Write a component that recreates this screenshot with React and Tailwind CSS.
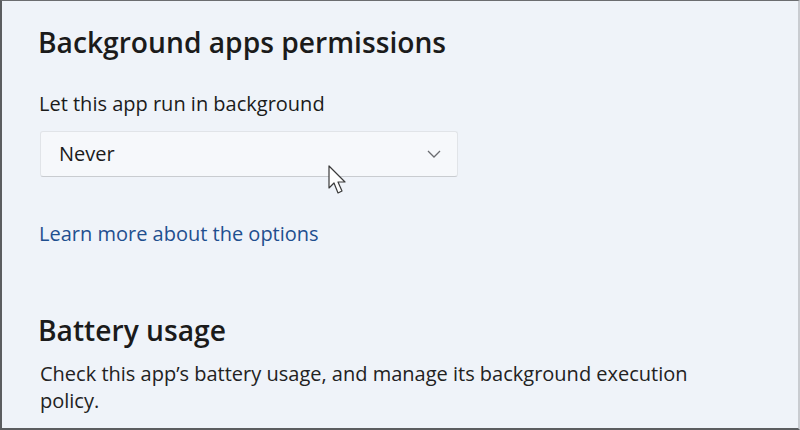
import React from "react";

function Cursor() {
  return (
    <svg width="20" height="30" viewBox="0 0 20 30" className="absolute left-[326px] top-[164px]">
      <path d="M1 1 L1 23 L6 18 L10 28 L14 26 L10 17 L17 17 Z" fill="#ffffff" stroke="#3a3a3a" strokeWidth="1.2" strokeLinejoin="round" />
    </svg>
  );
}

export default function App() {
  return (
    <div
      className="relative w-[800px] h-[430px] overflow-hidden bg-[#eff3f9] border-t border-l-2 border-b-2 border-r-2 border-t-[#6b6d70] border-l-[#5b5d60] border-b-[#5b5d60] border-r-[#c9ccd1] text-[#1b1b1b]"
      style={{ fontFamily: '"Open Sans", "Noto Sans", sans-serif' }}
    >
      <div className="flex flex-col pl-[36px] pt-[23px]">
        <h1 className="text-[28.2px] leading-[36px] font-semibold">Background apps permissions</h1>
        <p className="mt-[32px] ml-[1px] text-[20px] leading-[24px]">Let this app run in background</p>
        <div className="mt-[15px] ml-[2px] w-[418px] h-[46px] flex items-center justify-between pl-[18px] pr-[16px] bg-[#f6f8fb] border border-[#e1e4e8] border-b-[#c9ccd0] rounded-[3px]">
          <span className="text-[20px]">Never</span>
          <svg width="14" height="8" viewBox="0 0 14 8">
            <path d="M1 1 L7 7 L13 1" fill="none" stroke="#6a6c70" strokeWidth="1.3" />
          </svg>
        </div>
        <a className="mt-[45px] ml-[1px] text-[20px] leading-[24px] text-[#1f4f8f]">Learn more about the options</a>
        <h2 className="mt-[66px] text-[28.2px] leading-[36px] font-semibold">Battery usage</h2>
        <p className="mt-[12px] ml-[2px] w-[680px] text-[20px] leading-[27px] text-[#222]">
          Check this app’s battery usage, and manage its background execution policy.
        </p>
      </div>
      <Cursor />
    </div>
  );
}
